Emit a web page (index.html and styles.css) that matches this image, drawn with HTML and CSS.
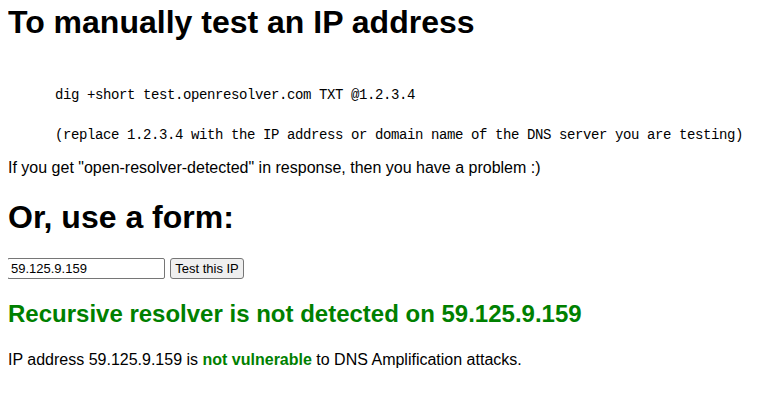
FILE: index.html
```html
<!DOCTYPE html>
<html>
<head>
<meta charset="utf-8">
<title>Open Resolver Test</title>
<link rel="stylesheet" href="styles.css">
</head>
<body>
<h1 class="title">To manually test an IP address</h1>
<div class="cmd">
  <div class="cmd-line first">dig +short test.openresolver.com TXT @1.2.3.4</div>
  <div class="cmd-line second">(replace 1.2.3.4 with the IP address or domain name of the DNS server you are testing)</div>
</div>
<p class="note">If you get "open-resolver-detected" in response, then you have a problem :)</p>
<h1 class="title form-title">Or, use a form:</h1>
<form class="form">
  <input class="ip" type="text" value="59.125.9.159">
  <button class="btn" type="button">Test this IP</button>
</form>
<h2 class="result">Recursive resolver is not detected on 59.125.9.159</h2>
<p class="summary">IP address 59.125.9.159 is <b class="ok">not vulnerable</b> to DNS Amplification attacks.</p>
</body>
</html>
```
FILE: styles.css
```css
html, body {
  background: #fff;
}
body {
  margin: 4px 8px 0 8px;
  font-family: "Liberation Sans", Arial, sans-serif;
  font-size: 16px;
  color: #000;
}
.title {
  margin: 0;
  font-size: 32px;
  font-weight: bold;
  line-height: 37px;
}
.cmd {
  margin: 46px 0 0 47px;
  font-family: "Liberation Mono", "Courier New", monospace;
  font-size: 14px;
  letter-spacing: -0.4px;
  line-height: 16px;
}
.cmd-line {
  white-space: pre;
}
.cmd-line.second {
  margin-top: 24px;
}
.note {
  margin: 16px 0 0 0;
  line-height: 18px;
}
.form-title {
  margin-top: 22px;
}
.form {
  display: flex;
  align-items: stretch;
  gap: 5px;
  margin: 22px 0 0 -1px;
}
.ip {
  box-sizing: border-box;
  width: 158px;
  height: 21px;
  margin: 0;
  padding: 1px 3px;
  border: 1px solid #767676;
  border-radius: 2px;
  font-family: "Liberation Sans", Arial, sans-serif;
  font-size: 13px;
  color: #000;
  background: #fff;
}
.btn {
  box-sizing: border-box;
  width: 74px;
  height: 21px;
  margin: 0;
  padding: 0 4px;
  border: 1px solid #767676;
  border-radius: 3px;
  background: #efefef;
  font-family: "Liberation Sans", Arial, sans-serif;
  font-size: 13px;
  color: #000;
}
.result {
  margin: 21px 0 0 0;
  font-size: 24px;
  font-weight: bold;
  line-height: 28px;
  color: #008000;
}
.summary {
  margin: 23px 0 0 0;
  line-height: 18px;
}
.ok {
  color: #008000;
}
```
